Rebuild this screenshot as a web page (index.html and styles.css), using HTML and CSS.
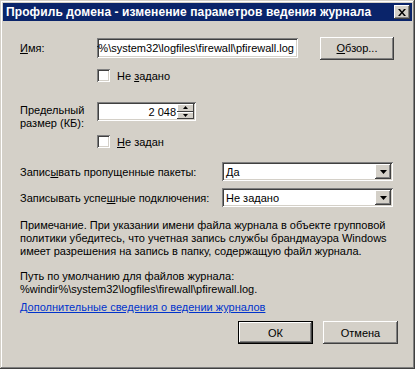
FILE: index.html
```html
<!DOCTYPE html>
<html lang="ru">
<head>
  <meta charset="UTF-8" />
  <title>Профиль домена - изменение параметров ведения журнала</title>
  <link rel="stylesheet" href="styles.css">
</head>
<body>
  <div class="window">
    <div class="titlebar">
      <span class="title">Профиль домена - изменение параметров ведения журнала</span>
      <span class="close-btn">
        <svg width="8" height="7" viewBox="0 0 8 7"><path d="M0 0h2l2 2.5 2-2.5h2l-3 3.5 3 3.5h-2l-2-2.5-2 2.5h-2l3-3.5z" fill="#000"/></svg>
      </span>
    </div>

    <div class="content">
      <div class="row row-name">
        <span class="label label-short"><u>И</u>мя:</span>
        <div class="field field-path"><span>%windir%\system32\logfiles\firewall\pfirewall.log</span></div>
        <span class="btn btn-browse"><u>О</u>бзор...</span>
      </div>

      <div class="check-row check-first">
        <span class="checkbox"></span>
        <span>Не <u>з</u>адано</span>
      </div>

      <div class="row row-size">
        <span class="label label-short label-two">Предельный<br>размер (КБ):</span>
        <div class="field field-spin">
          <span class="spin-value">2 048</span>
          <span class="spin">
            <span class="spin-btn"><svg width="5" height="3" viewBox="0 0 5 3"><path d="M2.5 0L5 3H0z" fill="#000"/></svg></span>
            <span class="spin-btn"><svg width="5" height="3" viewBox="0 0 5 3"><path d="M0 0h5L2.5 3z" fill="#000"/></svg></span>
          </span>
        </div>
      </div>

      <div class="check-row check-second">
        <span class="checkbox"></span>
        <span><u>Н</u>е задан</span>
      </div>

      <div class="row row-select row-select-first">
        <span class="label label-long">Запис<u>ы</u>вать пропущенные пакеты:</span>
        <div class="combo">
          <span class="combo-value">Да</span>
          <span class="combo-btn"><svg width="7" height="4" viewBox="0 0 7 4"><path d="M0 0h7L3.5 4z" fill="#000"/></svg></span>
        </div>
      </div>

      <div class="row row-select row-select-second">
        <span class="label label-long">Записывать успе<u>ш</u>ные подключения:</span>
        <div class="combo">
          <span class="combo-value">Не задано</span>
          <span class="combo-btn"><svg width="7" height="4" viewBox="0 0 7 4"><path d="M0 0h7L3.5 4z" fill="#000"/></svg></span>
        </div>
      </div>

      <p class="note">
        Примечание. При указании имени файла журнала в объекте групповой<br>
        политики убедитесь, что учетная запись службы брандмауэра Windows<br>
        имеет разрешения на запись в папку, содержащую файл журнала.
      </p>

      <p class="path">
        Путь по умолчанию для файлов журнала:<br>
        %windir%\system32\logfiles\firewall\pfirewall.log.
      </p>

      <a class="link" href="#">Дополнительные сведения о ведении журналов</a>

      <div class="actions">
        <span class="btn btn-default">ОК</span>
        <span class="btn">Отмена</span>
      </div>
    </div>
  </div>
</body>
</html>
```

FILE: styles.css
```css
html, body {
  margin: 0;
  padding: 0;
  background: #d4d0c8;
}

body {
  font-family: 'Liberation Sans', Arial, sans-serif;
  font-size: 11px;
  color: #000;
}

.window {
  box-sizing: border-box;
  width: 415px;
  height: 369px;
  padding: 3px;
  background: #d4d0c8;
  box-shadow: inset -1px -1px #404040, inset 1px 1px #d4d0c8,
              inset -2px -2px #808080, inset 2px 2px #fff;
}

.titlebar {
  height: 18px;
  background: #0a246a;
  display: flex;
  align-items: center;
  justify-content: space-between;
  padding: 0 2px 0 3px;
}

.title {
  color: #fff;
  font-weight: bold;
  font-size: 12px;
  letter-spacing: 0.1px;
}

.close-btn {
  box-sizing: border-box;
  width: 16px;
  height: 14px;
  background: #d4d0c8;
  display: flex;
  align-items: center;
  justify-content: center;
  box-shadow: inset -1px -1px #404040, inset 1px 1px #fff, inset -2px -2px #808080;
}

.content {
  padding: 0 18px 0 17px;
}

.row {
  display: flex;
  align-items: center;
}

.label-short {
  width: 77px;
  flex: none;
}

.label-long {
  width: 202px;
  flex: none;
}

.row-name {
  height: 22px;
  margin-top: 16px;
}

.field {
  box-sizing: border-box;
  background: #fff;
  height: 20px;
  display: flex;
  align-items: center;
  overflow: hidden;
  white-space: nowrap;
  box-shadow: inset 1px 1px #808080, inset -1px -1px #fff,
              inset 2px 2px #404040, inset -2px -2px #d4d0c8;
}

.field-path {
  width: 201px;
  justify-content: flex-end;
  padding: 0 4px 0 2px;
}

.btn {
  box-sizing: border-box;
  width: 75px;
  height: 23px;
  display: flex;
  align-items: center;
  justify-content: center;
  background: #d4d0c8;
  box-shadow: inset -1px -1px #404040, inset 1px 1px #fff, inset -2px -2px #808080;
}

.btn-browse {
  margin-left: 22px;
  width: 74px;
}

.btn-default {
  box-shadow: inset 0 0 0 1px #000, inset -2px -2px #404040, inset 2px 2px #fff, inset -3px -3px #808080;
}

.check-row {
  display: flex;
  align-items: center;
  height: 13px;
  padding-left: 77px;
}

.check-first {
  margin-top: 10px;
}

.check-second {
  margin-top: 5px;
}

.checkbox {
  box-sizing: border-box;
  width: 13px;
  height: 13px;
  margin-right: 7px;
  background: #fff;
  box-shadow: inset 1px 1px #808080, inset -1px -1px #fff,
              inset 2px 2px #404040, inset -2px -2px #d4d0c8;
}

.row-size {
  align-items: flex-start;
  margin-top: 20px;
}

.label-two {
  line-height: 13px;
  margin-top: 2px;
}

.field-spin {
  width: 99px;
  height: 19px;
  padding: 2px;
}

.spin-value {
  flex: 1;
  text-align: right;
  padding-right: 1px;
}

.spin {
  display: flex;
  flex-direction: column;
  width: 17px;
  height: 15px;
}

.spin-btn {
  flex: 1;
  display: flex;
  align-items: center;
  justify-content: center;
  background: #d4d0c8;
  box-shadow: inset -1px -1px #404040, inset 1px 1px #fff;
}

.row-select-first {
  margin-top: 14px;
}

.row-select-second {
  margin-top: 7px;
}

.combo {
  box-sizing: border-box;
  width: 171px;
  height: 19px;
  padding: 2px;
  display: flex;
  align-items: center;
  background: #fff;
  box-shadow: inset 1px 1px #808080, inset -1px -1px #fff,
              inset 2px 2px #404040, inset -2px -2px #d4d0c8;
}

.combo-value {
  flex: 1;
  padding-left: 2px;
}

.combo-btn {
  width: 16px;
  height: 15px;
  display: flex;
  align-items: center;
  justify-content: center;
  background: #d4d0c8;
  box-shadow: inset -1px -1px #404040, inset 1px 1px #fff, inset -2px -2px #808080;
}

.note {
  margin: 12px 0 0;
  line-height: 13px;
}

.path {
  margin: 12px 0 0;
  line-height: 13px;
}

.link {
  display: block;
  margin-top: 5px;
  line-height: 13px;
  color: #0033cc;
}

.actions {
  display: flex;
  justify-content: flex-end;
  gap: 10px;
  margin-top: 7px;
  margin-right: -4px;
}
```
